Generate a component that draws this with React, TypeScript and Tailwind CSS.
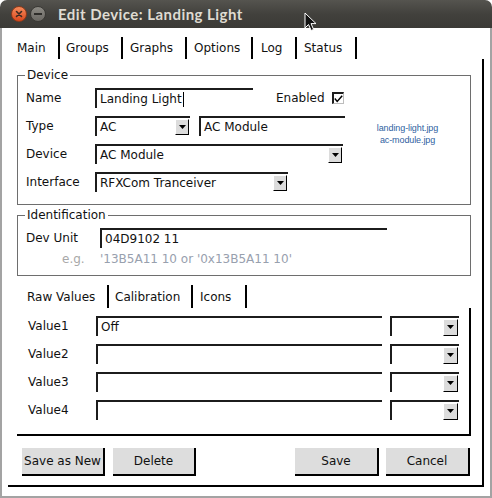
import React from "react";

function Arrow() {
  return (
    <svg width="7" height="4" viewBox="0 0 7 4">
      <path d="M0 0 L7 0 L3.5 4 Z" fill="#000" />
    </svg>
  );
}

function DropButton({ h = "h-[16px]", w = "w-[14px]" }: { h?: string; w?: string }) {
  return (
    <div
      className={`${w} ${h} ml-auto mr-[1px] bg-[#dcdcdc] border-t border-l border-t-white border-l-white border-r border-b border-r-black border-b-black flex items-center justify-center shrink-0`}
    >
      <Arrow />
    </div>
  );
}

function Entry({ w, value, cursor }: { w: string; value?: string; cursor?: boolean }) {
  return (
    <div className={`${w} h-[20px] border-t-2 border-l-2 border-[#1c1c1c] bg-white flex items-center pl-[3px] shrink-0`}>
      <span className="leading-none whitespace-nowrap">{value}</span>
      {cursor && <span className="inline-block w-px h-[15px] bg-black ml-[1px]" />}
    </div>
  );
}

function Combo({ w, value, btnW, btnH }: { w: string; value?: string; btnW?: string; btnH?: string }) {
  return (
    <div className={`${w} h-[20px] border-t-2 border-l-2 border-[#1c1c1c] bg-white flex items-center pl-[3px] shrink-0`}>
      <span className="leading-none whitespace-nowrap">{value}</span>
      <DropButton w={btnW} h={btnH} />
    </div>
  );
}

function Tab({ w, pl, label }: { w: string; pl: string; label: string }) {
  return (
    <div className={`${w} ${pl} h-full border-r-2 border-black flex items-center shrink-0`}>
      <span className="leading-none">{label}</span>
    </div>
  );
}

function Button({ w, label }: { w: string; label: string }) {
  return (
    <div className={`${w} h-[28px] bg-[#dddddd] border-r-2 border-b-2 border-black flex items-center justify-center shrink-0`}>
      <span className="leading-none">{label}</span>
    </div>
  );
}

function Row({ label, lw, children, h = "h-[28px]" }: { label: string; lw: string; children?: React.ReactNode; h?: string }) {
  return (
    <div className={`${h} flex items-center`}>
      <div className={`${lw} shrink-0 leading-none`}>{label}</div>
      {children}
    </div>
  );
}

export default function App() {
  return (
    <div className="w-[492px] h-[498px] bg-white overflow-hidden relative font-['DejaVu_Sans',sans-serif] text-[12px] text-[#111]">
      {/* Title bar */}
      <div className="h-[28px] rounded-t-[7px] bg-gradient-to-b from-[#55544f] via-[#42413d] to-[#3b3a36] flex items-center pl-[11px]">
        <div className="w-[16px] h-[16px] rounded-full bg-gradient-to-b from-[#f58a5a] to-[#d9461a] border border-[#8f3a1a] flex items-center justify-center">
          <svg width="8" height="8" viewBox="0 0 8 8">
            <path d="M1.5 1.5 L6.5 6.5 M6.5 1.5 L1.5 6.5" stroke="#3a2a22" strokeWidth="1.6" strokeLinecap="round" />
          </svg>
        </div>
        <div className="w-[16px] h-[16px] ml-[3px] rounded-full bg-gradient-to-b from-[#8c8a84] to-[#6a6863] border border-[#3a3935] flex items-center justify-center">
          <div className="w-[8px] h-[2px] bg-[#2e2d2a]" />
        </div>
        <div className="ml-[12px] mt-[1px] font-['Lato',sans-serif] font-bold text-[15px] tracking-[0.45px] text-[#dfdbd2] leading-none">
          Edit Device: Landing Light
        </div>
      </div>

      {/* Window body */}
      <div className="h-[470px] border-x-2 border-b-2 border-[#a3a3a3] pt-[9px] pl-[6px]">
        <div className="w-[476px]">
          {/* Main tabs */}
          <div className="h-[22px] flex">
            <Tab w="w-[52px]" pl="pl-[9px]" label="Main" />
            <Tab w="w-[63px]" pl="pl-[6px]" label="Groups" />
            <Tab w="w-[64px]" pl="pl-[7px]" label="Graphs" />
            <Tab w="w-[66px]" pl="pl-[7px]" label="Options" />
            <Tab w="w-[44px]" pl="pl-[8px]" label="Log" />
            <Tab w="w-[60px]" pl="pl-[7px]" label="Status" />
          </div>

          {/* Main page */}
          <div className="border-r-2 border-b-2 border-black pl-[9px] pt-[16px] pb-[9px]">
            {/* Device box */}
            <div className="relative w-[454px] border border-[#6e6e6e] pl-[8px] pt-[8px] pb-[8px] flex">
              <span className="absolute -top-[8px] left-[7px] bg-white px-[2px] leading-[14px]">Device</span>
              <div className="w-[319px] shrink-0">
                <Row label="Name" lw="w-[69px]">
                  <Entry w="w-[158px]" value="Landing Light" cursor />
                  <span className="ml-[23px] leading-none">Enabled</span>
                  <div className="ml-[7px] w-[12px] h-[12px] border-t-2 border-l-2 border-[#1c1c1c] border-r border-b border-r-[#bdbdbd] border-b-[#bdbdbd] bg-white flex items-center justify-center">
                    <svg width="9" height="8" viewBox="0 0 9 8">
                      <path d="M0.8 3.6 L3.2 6.4 L8.2 0.8" stroke="#000" strokeWidth="1.5" fill="none" />
                    </svg>
                  </div>
                </Row>
                <Row label="Type" lw="w-[69px]">
                  <Combo w="w-[95px]" value="AC" />
                  <div className="ml-[9px]">
                    <Entry w="w-[146px]" value="AC Module" />
                  </div>
                </Row>
                <Row label="Device" lw="w-[69px]">
                  <Combo w="w-[248px]" value="AC Module" />
                </Row>
                <Row label="Interface" lw="w-[69px]">
                  <Combo w="w-[193px]" value="RFXCom Tranceiver" />
                </Row>
              </div>
              <div className="flex-1 flex flex-col items-center pt-[38px] font-['Liberation_Sans',sans-serif] text-[9px] leading-[12px] text-[#2f5f9f] tracking-[-0.1px]">
                <span>landing-light.jpg</span>
                <span>ac-module.jpg</span>
              </div>
            </div>

            {/* Identification box */}
            <div className="relative w-[454px] mt-[10px] border border-[#6e6e6e] pl-[8px] pt-[11px] pb-[6px]">
              <span className="absolute -top-[8px] left-[7px] bg-white px-[2px] leading-[14px]">Identification</span>
              <Row label="Dev Unit" lw="w-[74px]" h="h-[22px]">
                <Entry w="w-[287px]" value="04D9102 11" />
              </Row>
              <div className="h-[20px] flex items-center">
                <div className="w-[74px] pl-[36px] text-[#a8a8a8] leading-none">e.g.</div>
                <div className="text-[#98a0ae] leading-none">'13B5A11 10 or '0x13B5A11 10'</div>
              </div>
            </div>

            {/* Sub notebook */}
            <div className="w-[454px] mt-[9px] ml-0">
              <div className="h-[23px] flex">
                <Tab w="w-[92px]" pl="pl-[10px]" label="Raw Values" />
                <Tab w="w-[84px]" pl="pl-[6px]" label="Calibration" />
                <Tab w="w-[54px]" pl="pl-[7px]" label="Icons" />
              </div>
              <div className="border-r-2 border-b-2 border-black pl-[11px] pt-[4px] pb-[10px]">
                {["Value1", "Value2", "Value3", "Value4"].map((v, i) => (
                  <Row key={v} label={v} lw="w-[68px]">
                    <Entry w="w-[286px]" value={i === 0 ? "Off" : ""} />
                    <div className="ml-[8px]">
                      <Combo w="w-[69px]" btnW="w-[15px]" btnH="h-[17px]" />
                    </div>
                  </Row>
                ))}
              </div>
            </div>

            {/* Buttons */}
            <div className="mt-[12px] pl-[5px] pr-[12px] flex">
              <Button w="w-[83px]" label="Save as New" />
              <div className="ml-[8px]">
                <Button w="w-[83px]" label="Delete" />
              </div>
              <div className="ml-auto">
                <Button w="w-[84px]" label="Save" />
              </div>
              <div className="ml-[7px]">
                <Button w="w-[84px]" label="Cancel" />
              </div>
            </div>
          </div>
        </div>
      </div>

      {/* Mouse pointer */}
      <svg className="absolute left-[304px] top-[12px]" width="14" height="20" viewBox="0 0 14 20">
        <path d="M1 1 L1 16 L4.5 12.5 L7.2 18.5 L9.6 17.4 L7 11.6 L12 11.6 Z" fill="#111" stroke="#fff" strokeWidth="1" strokeLinejoin="round" />
      </svg>
    </div>
  );
}
